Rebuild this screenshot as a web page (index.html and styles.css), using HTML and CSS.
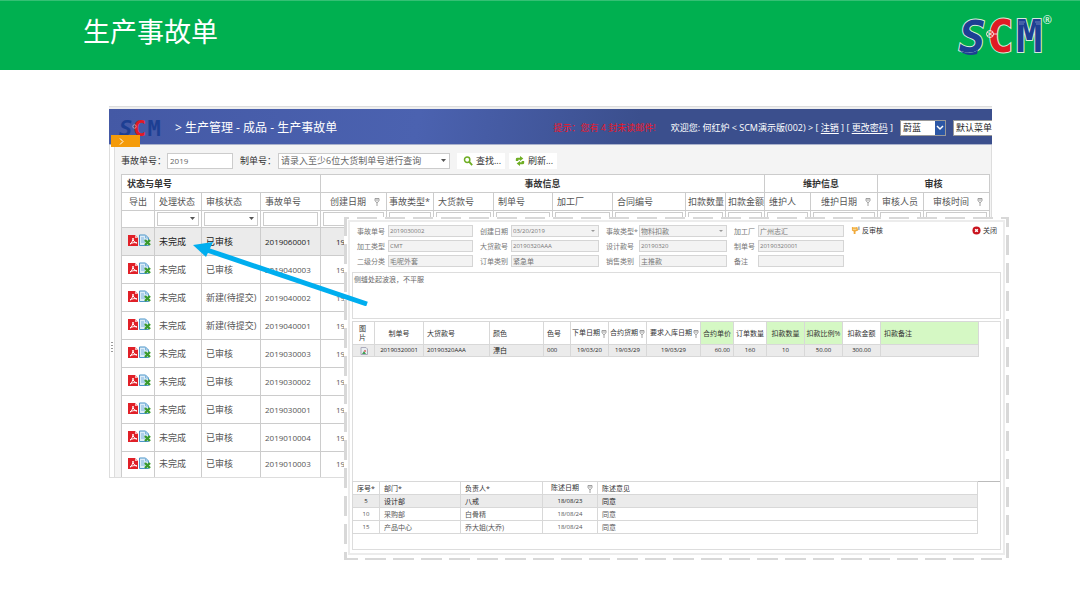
FILE: index.html
```
<!DOCTYPE html>
<html lang="zh-CN">
<head>
<meta charset="utf-8">
<title>生产事故单</title>
<link rel="stylesheet" href="styles.css">
</head>
<body>
<svg class="defs" aria-hidden="true">
  <symbol id="pdf" viewBox="0 0 10 12"><path d="M0 1h7l3 3v8H0z" fill="#e02028"/><path d="M7 1v3h3z" fill="#f9b5b5"/><path d="M2 10c2-1 3-4 3-6 0 3 1 4 4 5-3-1-5 0-7 1z" fill="none" stroke="#fff"/></symbol>
  <symbol id="xls" viewBox="0 0 12 12"><path d="M.5 1h6l3 3v7.500h-9z" fill="#dcecf8" stroke="#4b95c9"/><path d="M6.500 1v3h3M2 4h3M2 6h4M2 8h4" fill="none" stroke="#7fb4dc"/><path d="M6 6l5 5M11 6l-5 5" stroke="#3a9a2c" stroke-width="2.400"/></symbol>
  <symbol id="pin" viewBox="0 0 6 8"><path d="M1 .5h4v2l-1.500 2h-1L1 2.500zM3 4.500V8M1.500 2h3" fill="none" stroke="#888" stroke-width=".8"/></symbol>
</svg>

<header class="banner">
  <h1>生产事故单</h1>
  <div class="brand">
    <svg class="logo logo-lg" viewBox="0 0 86 42" role="img" aria-label="SCM">
      <text class="mark-s" x="0" y="37">S</text><text class="mark-c" x="28" y="37">C</text><text class="mark-m" x="57" y="37">M</text>
      <path d="M1 36q12 4 18-1l-1 4q-10 3-17-3z" fill="#1d3f93" stroke="none"/>
      <g fill="none" stroke="#f6dada" stroke-width="1"><circle cx="31" cy="19" r="3.500"/><path d="M28 17l6 4M28 21l6-4M34 19h4"/></g>
      <path d="M60 7h6M60 9h5M76 7h5M77 9h5" stroke="#6d83bd" stroke-width="1"/>
    </svg>
    <sup>®</sup>
  </div>
</header>

<main class="stage">
  <section class="app">
    <header class="app-head">
      <svg class="logo logo-sm" viewBox="0 0 86 42" role="img" aria-label="SCM">
        <text class="mark-s" x="0" y="37">S</text><text class="mark-c" x="28" y="37">C</text><text class="mark-m" x="57" y="37">M</text>
        <circle cx="31" cy="19" r="3.500" fill="none" stroke="#f6dada" stroke-width="1"/>
      </svg>
      <h2>&gt; 生产管理 - 成品 - 生产事故单</h2>
      <span class="notice">提示：您有 4 封未读邮件!</span>
      <span class="welcome">欢迎您: 何红炉 &lt; SCM演示版(002) &gt; [ <a href="#">注销</a> ] [ <a href="#">更改密码</a> ]</span>
      <select class="theme" aria-label="主题"><option>蔚蓝</option></select>
      <select class="menu" aria-label="菜单"><option>默认菜单</option></select>
      <button class="expand" aria-label="展开"><svg viewBox="0 0 5 7"><path d="M1 .5l3 3-3 3" fill="none" stroke="#fff"/></svg></button>
    </header>
    <div class="app-body">
      <div class="splitter"></div>
      <div class="content">
        <form class="toolbar">
          <label for="no">事故单号：</label><input id="no" class="no" value="2019">
          <label for="order">制单号：</label><select id="order" class="order"><option>请录入至少6位大货制单号进行查询</option></select>
          <button type="button"><svg viewBox="0 0 12 12"><circle cx="5" cy="4.500" r="3.200" fill="none" stroke="#6fae24" stroke-width="1.800"/><path d="M7.500 7l3.500 4" stroke="#6fae24" stroke-width="2.200"/></svg>查找...</button>
          <button type="button"><svg viewBox="0 0 12 12"><path d="M1 6V3.500Q1 2 3 2h3V0l4 3-4 3V4.500H4V6zM11 6v2.500Q11 10 9 10H6v2L2 9l4-3v1.500h2V6z" fill="#6fae24"/></svg>刷新...</button>
        </form>
        <table class="list">
          <colgroup><col class="w33"><col class="w47"><col class="w59"><col class="w60"><col class="w66"><col class="w47"><col class="w60"><col class="w59"><col class="w60"><col class="w73"><col class="w40"><col class="w39"><col class="w46"><col class="w67"><col class="w46"><col class="w66"></colgroup>
          <thead>
            <tr class="groups"><th colspan="4" class="left">状态与单号</th><th colspan="8">事故信息</th><th colspan="2">维护信息</th><th colspan="2">审核</th></tr>
            <tr class="names"><th class="mid">导出</th><th>处理状态</th><th>审核状态</th><th>事故单号</th><th class="date">创建日期<svg><use href="#pin"/></svg></th><th class="tight">事故类型*</th><th>大货款号</th><th>制单号</th><th>加工厂</th><th>合同编号</th><th class="tight">扣款数量</th><th class="tight">扣款金额</th><th>维护人</th><th class="date">维护日期<svg><use href="#pin"/></svg></th><th>审核人员</th><th class="date">审核时间<svg><use href="#pin"/></svg></th></tr>
            <tr class="filters"><td></td><td><select aria-label="处理状态"></select></td><td><select aria-label="审核状态"></select></td><td><input aria-label="事故单号"></td><td><select aria-label="创建日期"></select></td><td><input aria-label="事故类型"></td><td><input aria-label="大货款号"></td><td><input aria-label="制单号"></td><td><input aria-label="加工厂"></td><td><input aria-label="合同编号"></td><td><input aria-label="扣款数量"></td><td><input aria-label="扣款金额"></td><td><input aria-label="维护人"></td><td><input aria-label="维护日期"></td><td><input aria-label="审核人员"></td><td><input aria-label="审核时间"></td></tr>
          </thead>
          <tbody>
            <tr class="on"><td class="export"><svg><use href="#pdf"/></svg><svg><use href="#xls"/></svg></td><td>未完成</td><td>已审核</td><td class="num">2019060001</td><td class="num day">19,</td><td colspan="11"></td></tr>
            <tr><td class="export"><svg><use href="#pdf"/></svg><svg><use href="#xls"/></svg></td><td>未完成</td><td>已审核</td><td class="num">2019040003</td><td class="num day">19,</td><td colspan="11"></td></tr>
            <tr><td class="export"><svg><use href="#pdf"/></svg><svg><use href="#xls"/></svg></td><td>未完成</td><td>新建(待提交)</td><td class="num">2019040002</td><td class="num day">19,</td><td colspan="11"></td></tr>
            <tr><td class="export"><svg><use href="#pdf"/></svg><svg><use href="#xls"/></svg></td><td>未完成</td><td>新建(待提交)</td><td class="num">2019040001</td><td class="num day">19,</td><td colspan="11"></td></tr>
            <tr><td class="export"><svg><use href="#pdf"/></svg><svg><use href="#xls"/></svg></td><td>未完成</td><td>已审核</td><td class="num">2019030003</td><td class="num day">19,</td><td colspan="11"></td></tr>
            <tr><td class="export"><svg><use href="#pdf"/></svg><svg><use href="#xls"/></svg></td><td>未完成</td><td>已审核</td><td class="num">2019030002</td><td class="num day">19,</td><td colspan="11"></td></tr>
            <tr><td class="export"><svg><use href="#pdf"/></svg><svg><use href="#xls"/></svg></td><td>未完成</td><td>已审核</td><td class="num">2019030001</td><td class="num day">19,</td><td colspan="11"></td></tr>
            <tr><td class="export"><svg><use href="#pdf"/></svg><svg><use href="#xls"/></svg></td><td>未完成</td><td>已审核</td><td class="num">2019010004</td><td class="num day">19,</td><td colspan="11"></td></tr>
            <tr><td class="export"><svg><use href="#pdf"/></svg><svg><use href="#xls"/></svg></td><td>未完成</td><td>已审核</td><td class="num">2019010003</td><td class="num day">19,</td><td colspan="11"></td></tr>
          </tbody>
        </table>
      </div>
    </div>
  </section>

  <section class="popup">
    <div class="sheet">
      <form class="form">
        <div class="fields f1">
          <label for="a1">事故单号</label><input id="a1" class="num" value="2019030002">
          <label for="a2">加工类型</label><input id="a2" class="num" value="CMT">
          <label for="a3">二级分类</label><input id="a3" value="毛呢外套">
        </div>
        <div class="fields f2">
          <label for="b1">创建日期</label><select id="b1" class="num"><option>03/20/2019</option></select>
          <label for="b2">大货款号</label><input id="b2" class="num" value="20190320AAA">
          <label for="b3">订单类别</label><input id="b3" value="紧急单">
        </div>
        <div class="fields f3">
          <label for="c1">事故类型*</label><select id="c1"><option>物料扣款</option></select>
          <label for="c2">设计款号</label><input id="c2" class="num" value="20190320">
          <label for="c3">销售类别</label><input id="c3" value="主推款">
        </div>
        <div class="fields f4">
          <label for="d1">加工厂</label><input id="d1" value="广州志汇">
          <label for="d2">制单号</label><input id="d2" class="num" value="20190320001">
          <label for="d3">备注</label><input id="d3">
        </div>
        <button type="button" class="undo"><svg viewBox="0 0 10 10"><path d="M1 1h6l1 4-3 1v3H3V6L1 5z" fill="#f0a93a"/><path d="M2 2h4M2 4h4" stroke="#fbdc9a"/><path d="M8 .5h1.500v4H8z" fill="#8fa3b5"/></svg>反审核</button>
        <button type="button" class="close"><svg viewBox="0 0 10 10"><circle cx="5" cy="5" r="4.500" fill="#c9141e"/><path d="M3.500 3.500l3 3M6.500 3.500l-3 3" stroke="#fff" stroke-width="1.600"/></svg>关闭</button>
      </form>
      <textarea class="memo" aria-label="事故说明">侧缝处起波浪，不平服</textarea>
      <div class="pane">
        <table class="detail">
          <colgroup><col class="w22"><col class="w49"><col class="w66"><col class="w54"><col class="w27"><col class="w38"><col class="w38"><col class="w54"><col class="w33"><col class="w33"><col class="w38"><col class="w38"><col class="w38"><col class="w98"></colgroup>
          <thead><tr><th class="pic">图片</th><th class="mid">制单号</th><th>大货款号</th><th>颜色</th><th>色号</th><th class="date">下单日期<svg><use href="#pin"/></svg></th><th class="date">合约货期<svg><use href="#pin"/></svg></th><th class="date">要求入库日期<svg><use href="#pin"/></svg></th><th class="mid hi">合约单价</th><th class="mid">订单数量</th><th class="mid hi">扣款数量</th><th class="mid hi">扣款比例%</th><th class="mid">扣款金额</th><th class="hi">扣款备注</th></tr></thead>
          <tbody><tr class="on"><td class="mid"><svg viewBox="0 0 8 8"><path d="M1 .5h5l1.500 1.500v5.500H1z" fill="#e9eef2" stroke="#aab"/><path d="M2 7l2-3 2 3z" fill="#3f9d52"/><path d="M4 3h2v2H4z" fill="#d88"/></svg></td><td class="num mid">20190320001</td><td class="num">20190320AAA</td><td>漂白</td><td class="num">000</td><td class="num mid">19/03/20</td><td class="num mid">19/03/29</td><td class="num mid">19/03/29</td><td class="num right">60.00</td><td class="num mid">160</td><td class="num mid">10</td><td class="num mid">50.00</td><td class="num mid">300.00</td><td></td></tr></tbody>
        </table>
      </div>
      <div class="pane notes-pane">
        <table class="notes">
          <colgroup><col class="w27"><col class="w81"><col class="w82"><col class="w55"><col></colgroup>
          <thead><tr><th class="mid">序号*</th><th>部门*</th><th>负责人*</th><th class="date">陈述日期<svg><use href="#pin"/></svg></th><th>陈述意见</th></tr></thead>
          <tbody>
            <tr class="on"><td class="num mid">5</td><td>设计部</td><td>八戒</td><td class="num mid">18/08/23</td><td>同意</td></tr>
            <tr><td class="num mid">10</td><td>采购部</td><td>白骨精</td><td class="num mid">18/08/24</td><td>同意</td></tr>
            <tr><td class="num mid">15</td><td>产品中心</td><td>乔大姐(大乔)</td><td class="num mid">18/08/24</td><td>同意</td></tr>
          </tbody>
        </table>
      </div>
    </div>
  </section>

  <svg class="pointer" viewBox="0 0 176 66" aria-hidden="true"><path d="M174 64L14 10" stroke="#00aeef" stroke-width="5"/><path d="M0 5l20-3-7 15z" fill="#00aeef"/></svg>
</main>
</body>
</html>
```
FILE: styles.css
```
* { box-sizing: border-box; }
body {
  margin: 0;
  background: #fff;
  color: #555;
  font: 9px/12px "Open Sans", "Noto Sans CJK SC", sans-serif;
}
h1, h2 { margin: 0; font-weight: 400; }
input, select, button, textarea { margin: 0; font: inherit; color: inherit; border-radius: 0; }
select { appearance: none; }
.defs { position: absolute; width: 0; height: 0; }

/* banner */
.banner {
  display: flex;
  justify-content: space-between;
  align-items: flex-start;
  height: 70px;
  padding: 11px 28px 0 83px;
  background: #00b050;
  border-top: 1px solid #35c074;
  color: #fff;
}
.banner h1 { font-size: 27px; line-height: 38px; font-family: "Noto Sans CJK SC", sans-serif; }
.brand { display: flex; align-items: flex-start; padding-top: 3px; }
.brand sup { margin-left: -2px; font-size: 11px; line-height: 10px; }
.logo { overflow: visible; font: 700 44px/44px "DejaVu Sans Mono", monospace; stroke-width: 2px; paint-order: stroke; }
.mark-s { font-style: italic; fill: #1d3f93; }
.mark-c { fill: #e01b24; }
.mark-m { fill: #1d3f93; }
.logo-lg { width: 86px; height: 42px; stroke: #d5ecd9; }
.logo-sm { width: 43px; height: 21px; stroke: none; flex: none; }

/* application window */
.stage { position: relative; padding: 36px 88px 130px 109px; }
.app { overflow: hidden; border: solid #ddd; border-width: 1px 0; }
.app-head {
  position: relative;
  display: flex;
  align-items: center;
  height: 38px;
  padding: 2px 0 0 10px;
  background: linear-gradient(100deg, #4459a5, #4b62b0 35%, #3b4f8d 60%, #3b4f8d);
  border-top: 2px solid #eee;
  border-bottom: 1px solid #aab2cc;
  color: #fff;
  white-space: nowrap;
}
.app-head h2 { margin-left: 13px; font-size: 12px; }
.notice { margin-left: auto; color: #f01525; }
.welcome { margin: 0 7px 0 15px; }
.welcome a { color: inherit; text-underline-offset: 2px; }
.app-head select { height: 16px; border: 1px solid #999; background: #fff; color: #222; padding: 0 2px; }
.app-head .theme {
  width: 46px;
  background: #fff url("data:image/svg+xml,%3Csvg xmlns='http://www.w3.org/2000/svg' width='10' height='14'%3E%3Cpath fill='%232c57a5' d='M0 0h10v14H0z'/%3E%3Cpath d='M2 5l3 3 3-3' fill='none' stroke='%23fff' stroke-width='1.500'/%3E%3C/svg%3E") right center no-repeat;
}
.app-head .menu { width: 39px; margin-left: 7px; border-right: 0; padding-right: 0; }
.expand {
  position: absolute;
  left: 2px;
  bottom: -3px;
  width: 29px;
  height: 12px;
  padding: 0 8px;
  border: 0;
  background: #f49b0b;
  display: flex;
  align-items: center;
}
.expand svg { width: 5px; height: 7px; }
.app-body { display: flex; border-right: 1px solid #ddd; }
.splitter {
  flex: none;
  width: 6px;
  border: solid #ddd;
  border-width: 0 1px;
  background: repeating-linear-gradient(#999 0 1px, #fff 1px 3px) 1px 197px / 2px 10px no-repeat;
}
.content { flex: 1; min-width: 0; padding: 0 1px 0 6px; background: #f4f4f4; }

.toolbar { display: flex; align-items: center; height: 29px; padding-top: 2px; white-space: nowrap; color: #333; }
.toolbar input, .toolbar select { height: 16px; padding: 0 2px; border: 1px solid #ccc; background-color: #fff; color: #666; }
.toolbar .no { width: 66px; margin-right: 7px; font-size: 8px; }
.toolbar .order { width: 172px; margin-right: 7px; }
.toolbar label { width: 46px; }
.toolbar label + .order { margin-left: -8px; }
.toolbar button {
  display: flex;
  align-items: center;
  gap: 3px;
  width: 48px;
  height: 16px;
  margin-right: 4px;
  padding: 0 6px;
  border: 0;
  background: #fff;
}
.toolbar svg { width: 10px; height: 10px; flex: none; }
.toolbar select, .filters select, .fields select {
  background-image: url("data:image/svg+xml,%3Csvg xmlns='http://www.w3.org/2000/svg' width='8' height='4'%3E%3Cpath d='M0 0h5L2.500 3z' fill='%23555'/%3E%3C/svg%3E");
  background-position: right center;
  background-repeat: no-repeat;
}
.fields select {
  background-image: url("data:image/svg+xml,%3Csvg xmlns='http://www.w3.org/2000/svg' width='7' height='3'%3E%3Cpath d='M0 0h4L2 2z' fill='%23999'/%3E%3C/svg%3E");
}

/* tables */
table { width: 100%; table-layout: fixed; border-collapse: collapse; background: #fff; }
th, td { padding: 0 0 0 4px; border: 1px solid #ccc; text-align: left; font-weight: 400; white-space: nowrap; overflow: hidden; }
th svg { width: 6px; height: 8px; }
.mid { text-align: center; padding: 0; }
.right { text-align: right; padding: 0 3px 0 0; }
.on { background: #ebebeb; color: #222; }
.list .num { font-size: 8px; }
.groups th { height: 18px; text-align: center; font-weight: 700; color: #333; padding: 0; }
.groups .left { text-align: left; padding-left: 5px; }
.names th { height: 18px; }
.names .tight { padding-left: 2px; }
.date { text-align: right; padding: 0 6px 0 0; }
.date svg { margin-left: 8px; vertical-align: middle; }
.filters td { height: 17px; padding: 0 2px; }
.filters input, .filters select { display: block; width: 100%; height: 14px; border: 1px solid #ccc; background-color: #fff; padding: 0; }
.list tbody td { height: 28px; }
.list tbody tr:last-child td { height: 25px; border-bottom: 0; }
.list .day { padding-left: 15px; }
.list .export { padding: 0 0 4px 6px; }
.export svg { width: 10px; height: 12px; margin-right: 1px; vertical-align: middle; }
.export svg + svg { width: 12px; }

.w22 { width: 22px; } .w27 { width: 27px; } .w33 { width: 33px; } .w38 { width: 38px; }
.w39 { width: 39px; } .w40 { width: 40px; } .w46 { width: 46px; } .w47 { width: 47px; }
.w49 { width: 49px; } .w54 { width: 54px; } .w55 { width: 55px; } .w59 { width: 59px; }
.w60 { width: 60px; } .w66 { width: 66px; } .w67 { width: 67px; } .w73 { width: 73px; }
.w81 { width: 81px; } .w82 { width: 82px; } .w98 { width: 98px; }

/* detail sheet laid over the list */
.popup {
  position: absolute;
  top: 147px;
  left: 344px;
  right: 71px;
  padding: 3px 4px 4px;
  font-size: 7px;
  line-height: 9px;
  background:
    repeating-linear-gradient(90deg, #d8d8d8 0 5px, #fff 5px 13px, #d8d8d8 13px 28px) left top / 100% 2px no-repeat,
    repeating-linear-gradient(90deg, #d8d8d8 0 14px, #fff 14px 21px, #d8d8d8 21px 28px) left bottom / 100% 2px no-repeat,
    repeating-linear-gradient(0deg, #d8d8d8 0 8px, #fff 8px 16px, #d8d8d8 16px 28px) left top / 3px 100% no-repeat,
    repeating-linear-gradient(180deg, #d8d8d8 0 10px, #fff 10px 18px, #d8d8d8 18px 28px) right top / 3px 100% no-repeat,
    #fff;
}
.popup .num { font-size: 6px; }
.sheet { padding: 3px 2px; border: 2px solid #ececec; margin-bottom: 1px; }
.form { display: flex; gap: 7px; padding: 0 4px 5px 5px; align-items: flex-start; color: #777; }
.fields { display: grid; row-gap: 3px; align-items: center; }
.f1 { grid-template-columns: 31px 85px; }
.f2 { grid-template-columns: 31px 88px; }
.f3 { grid-template-columns: 33px 88px; }
.f4 { grid-template-columns: 24px 86px; }
.fields label { white-space: nowrap; }
.fields input, .fields select { width: 100%; height: 12px; padding: 0 1px; border: 1px solid #d5d5d5; background-color: #f3f3f3; }
.form button { display: flex; align-items: center; gap: 2px; padding: 0; border: 0; background: none; color: #333; white-space: nowrap; height: 10px; }
.form button svg { width: 9px; height: 9px; }
.form .close { margin-left: auto; }
.memo { display: block; width: 100%; height: 47px; padding: 2px 1px; border: 1px solid #ddd; resize: none; color: #666; margin-bottom: 2px; }
.pane { min-height: 161px; padding-right: 21px; border: 1px solid #ddd; border-bottom-color: #bbb; }
.pane table { margin: -1px 0 0 -1px; }
.pane th { color: #333; }
.pane th, .pane td { border-color: #d8d8d8; }
.notes-pane { min-height: 69px; border-top: 0; border-bottom-color: #ddd; }
.detail th { height: 23px; padding-left: 3px; }
.detail th.mid { padding: 0; }
.detail th.pic { white-space: normal; padding: 0 6px; line-height: 9px; }
.detail td { height: 12px; padding-left: 3px; }
.detail td.mid { padding: 0; }
.detail td.right { padding: 0 3px 0 0; }
.detail td svg { display: block; width: 8px; height: 8px; margin: 0 auto; }
.detail .date { padding: 0 1px 0 0; }
.detail .date svg { margin-left: 1px; }
.hi { background: #d5f8c4; }
.notes th, .notes td { height: 13px; }
.notes .date { padding-right: 4px; }
.notes .date svg { margin-left: 8px; }

.pointer { position: absolute; left: 193px; top: 170px; width: 176px; height: 66px; }
```
